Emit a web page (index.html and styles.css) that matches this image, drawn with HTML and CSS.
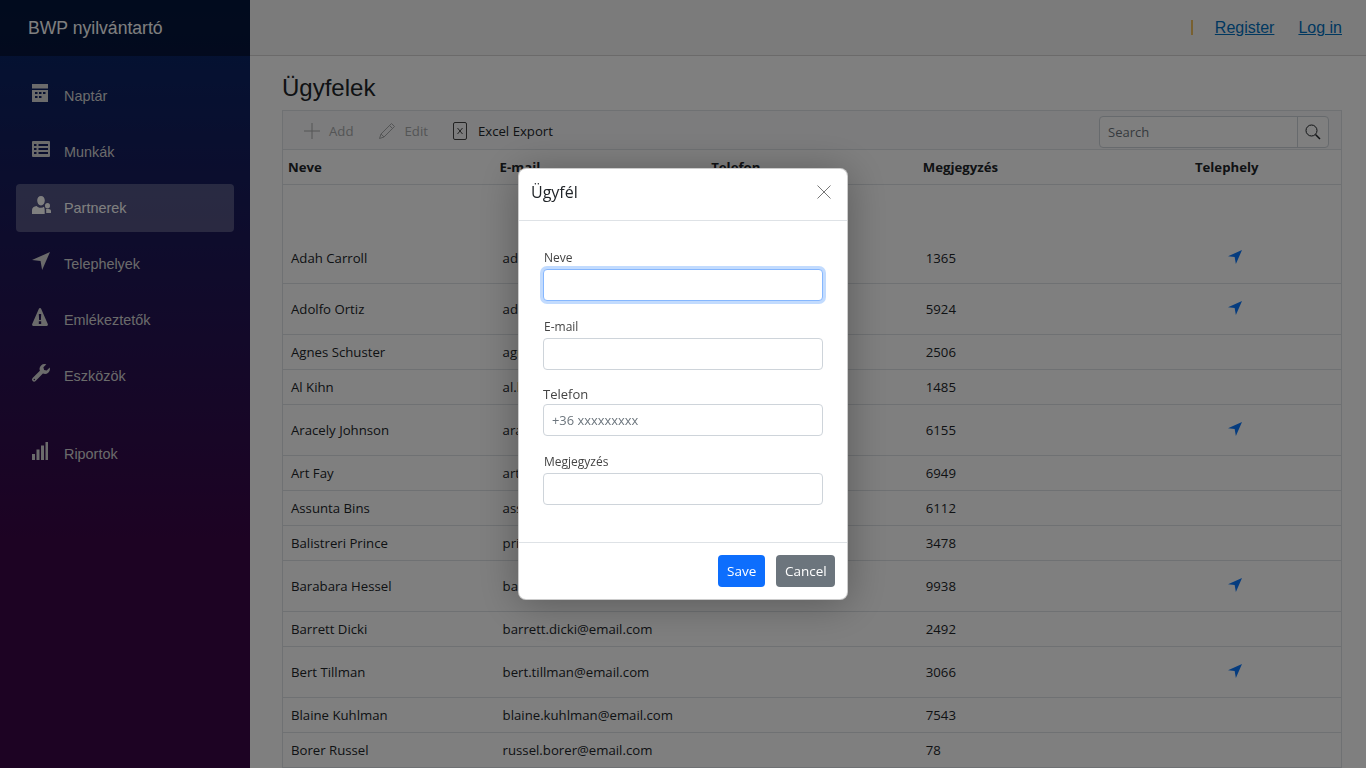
FILE: index.html
```html
<!DOCTYPE html>
<html lang="en">
    <head>
        <meta charset="UTF-8">
        <title>BWP nyilvántartó</title>
        <link rel="stylesheet" href="styles.css">
    </head>

    <body>
        <svg class="icon-defs" width="0" height="0">
            <symbol id="i-location" viewBox="0 0 16 16"><path d="M16 0 0 7.200l7.600.9L9 16z"/></symbol>
        </svg>

        <div class="app">
            <aside class="sidebar">
                <div class="brand">BWP nyilvántartó</div>
                <nav class="nav">
                    <a class="nav-item">
                        <svg class="nav-icon" viewBox="0 0 18 18"><path d="M0 0h16v4.500H0zM0 6h16v12H0zM3 8v2h2.500V8zm4 0v2h2.500V8zm4 0v2h2.500V8zM3 12v2h2.500v-2zm4 0v2h2.500v-2z" fill-rule="evenodd"/></svg>
                        Naptár
                    </a>
                    <a class="nav-item">
                        <svg class="nav-icon" viewBox="0 0 18 18"><path d="M1 1h16a1 1 0 0 1 1 1v14a1 1 0 0 1-1 1H1a1 1 0 0 1-1-1V2a1 1 0 0 1 1-1zm1 3v2h2.500V4zm4.500 0v2H16V4zM2 8v2h2.500V8zm4.500 0v2H16V8zM2 12v2h2.500v-2zm4.500 0v2H16v-2z" fill-rule="evenodd"/></svg>
                        Munkák
                    </a>
                    <a class="nav-item active">
                        <svg class="nav-icon" viewBox="0 0 18 18"><path d="M9 0c2.300 0 3.800 2 3.800 4.600S11.300 9.500 9 9.500 5.200 7.200 5.200 4.600 6.700 0 9 0zM0 14c0-2.300 2-3.500 4.600-4 1.100 1.300 2.700 2 4.400 1.800 1.300-.1 2.200-.5 2.900-1 .5 1 .8 2 .8 3.200v4H0zM15.500 7a2.500 2.700 0 1 1 0 5.400 2.500 2.700 0 0 1 0-5.400zM14 13h2.500c1.500 0 2.500.8 2.500 2v2h-4.800v-2.500c0-.5 0-1-.2-1.500z"/></svg>
                        Partnerek
                    </a>
                    <a class="nav-item">
                        <svg class="nav-icon" viewBox="0 0 16 16"><use href="#i-location"/></svg>
                        Telephelyek
                    </a>
                    <a class="nav-item">
                        <svg class="nav-icon" viewBox="0 0 18 18"><path d="M8 0c.5 0 .9.300 1.100.8l6.700 15.200c.4.900-.1 2-1.100 2H1.300c-1 0-1.500-1.100-1.100-2L6.900.8C7.100.3 7.500 0 8 0zM6.800 6l.3 6h1.800l.3-6zM6.800 13.200V16h2.400v-2.800z" fill-rule="evenodd"/></svg>
                        Emlékeztetők
                    </a>
                    <a class="nav-item">
                        <svg class="nav-icon" viewBox="0 0 18 18"><path d="M17.700 3.600l-3 3-2.600-.7-.7-2.600 3-3a5 5 0 0 0-6.500 6.400L.6 13.900a2.100 2.100 0 0 0 3 3l7.300-7.300a5 5 0 0 0 6.800-6zM2.300 16.200a.7.7 0 1 1 0-1.400.7.7 0 0 1 0 1.400z" fill-rule="evenodd"/></svg>
                        Eszközök
                    </a>
                    <a class="nav-item reports">
                        <svg class="nav-icon" viewBox="0 0 18 18"><path d="M0 12h3v6H0zM4.500 7.500h3V18h-3zM9 3.500h3V18H9zM13.500 0H16v18h-2.500z"/></svg>
                        Riportok
                    </a>
                </nav>
            </aside>

            <div class="main">
                <header class="topbar">
                    <span class="divider"></span>
                    <a class="top-link">Register</a>
                    <a class="top-link">Log in</a>
                </header>

                <div class="content">
                    <h1 class="title">Ügyfelek</h1>

                    <div class="grid">
                        <div class="toolbar">
                            <span class="tool disabled">
                                <svg class="tool-icon add" viewBox="0 0 16 16"><path d="M8 0v16M0 8h16" fill="none" stroke="currentColor"/></svg>
                                Add
                            </span>
                            <span class="tool disabled">
                                <svg class="tool-icon edit" viewBox="0 0 18 18"><path d="M13.500 1.500l3 3L6 15l-4.500 1.500L3 12zM11.500 3.500l3 3M3 12l3 3" fill="none" stroke="currentColor"/></svg>
                                Edit
                            </span>
                            <span class="tool">
                                <svg class="tool-icon excel" viewBox="0 0 14 18"><rect x=".5" y=".5" width="13" height="17" rx="1.500" fill="none" stroke="currentColor"/><path d="M4.500 6l5 6m0-6l-5 6" fill="none" stroke="currentColor"/></svg>
                                Excel Export
                            </span>
                            <div class="search">
                                <span class="search-input">Search</span>
                                <span class="search-btn">
                                    <svg width="16" height="16" viewBox="0 0 16 16"><circle cx="6.500" cy="6.500" r="5.500" fill="none" stroke="currentColor"/><path d="M10.500 10.500 15 15" fill="none" stroke="currentColor" stroke-width="1.500"/></svg>
                                </span>
                            </div>
                        </div>

                        <table class="data">
                            <thead>
                                <tr>
                                    <th>Neve</th>
                                    <th>E-mail</th>
                                    <th>Telefon</th>
                                    <th>Megjegyzés</th>
                                    <th class="site">Telephely</th>
                                </tr>
                            </thead>
                            <tbody>
                                <tr class="spacer"><td colspan="5"></td></tr>
                                <tr class="tall"><td>Adah Carroll</td><td>adah.carroll@email.com</td><td></td><td>1365</td><td class="site"><svg class="pin"><use href="#i-location"/></svg></td></tr>
                                <tr class="tall"><td>Adolfo Ortiz</td><td>adolfo.ortiz@email.com</td><td></td><td>5924</td><td class="site"><svg class="pin"><use href="#i-location"/></svg></td></tr>
                                <tr><td>Agnes Schuster</td><td>agnes.schuster@email.com</td><td></td><td>2506</td><td></td></tr>
                                <tr><td>Al Kihn</td><td>al.kihn@email.com</td><td></td><td>1485</td><td></td></tr>
                                <tr class="tall"><td>Aracely Johnson</td><td>aracely.johnson@email.com</td><td></td><td>6155</td><td class="site"><svg class="pin"><use href="#i-location"/></svg></td></tr>
                                <tr><td>Art Fay</td><td>art.fay@email.com</td><td></td><td>6949</td><td></td></tr>
                                <tr><td>Assunta Bins</td><td>assunta.bins@email.com</td><td></td><td>6112</td><td></td></tr>
                                <tr><td>Balistreri Prince</td><td>prince.balistreri@email.com</td><td></td><td>3478</td><td></td></tr>
                                <tr class="tall"><td>Barabara Hessel</td><td>barabara.hessel@email.com</td><td></td><td>9938</td><td class="site"><svg class="pin"><use href="#i-location"/></svg></td></tr>
                                <tr><td>Barrett Dicki</td><td>barrett.dicki@email.com</td><td></td><td>2492</td><td></td></tr>
                                <tr class="tall"><td>Bert Tillman</td><td>bert.tillman@email.com</td><td></td><td>3066</td><td class="site"><svg class="pin"><use href="#i-location"/></svg></td></tr>
                                <tr><td>Blaine Kuhlman</td><td>blaine.kuhlman@email.com</td><td></td><td>7543</td><td></td></tr>
                                <tr><td>Borer Russel</td><td>russel.borer@email.com</td><td></td><td>78</td><td></td></tr>
                            </tbody>
                        </table>
                    </div>
                </div>
            </div>
        </div>

        <div class="backdrop">
            <div class="modal">
                <div class="modal-head">
                    <span class="modal-title">Ügyfél</span>
                    <svg class="modal-close" viewBox="0 0 14 14"><path d="M.5.5l13 13m0-13l-13 13" fill="none" stroke="currentColor"/></svg>
                </div>
                <div class="modal-body">
                    <label class="small">Neve</label>
                    <div class="field focus"></div>
                    <label class="small">E-mail</label>
                    <div class="field"></div>
                    <label class="large">Telefon</label>
                    <div class="field placeholder">+36 xxxxxxxxx</div>
                    <label class="small">Megjegyzés</label>
                    <div class="field"></div>
                </div>
                <div class="modal-foot">
                    <button class="btn btn-save">Save</button>
                    <button class="btn btn-cancel">Cancel</button>
                </div>
            </div>
        </div>
    </body>
</html>
```

FILE: styles.css
```css
*{
    box-sizing: border-box;
}
html, body{
    height: 100%;
}
body{
    margin: 0;
    overflow: hidden;
    font-family: "Open Sans", "Noto Sans", sans-serif;
    font-size: 13.200px;
    color: #212529;
    background: #fff;
}
.icon-defs{
    position: absolute;
}
.app{
    display: flex;
    height: 768px;
}

/* sidebar */
.sidebar{
    width: 250px;
    flex: none;
    background-image: linear-gradient(180deg, #052767 0%, #3a0647 70%);
    font-family: "Liberation Sans", Arial, sans-serif;
}
.brand{
    height: 56px;
    padding: 0 28px;
    display: flex;
    align-items: center;
    background: rgba(0,0,0,0.4);
    color: #fff;
    font-size: 17.600px;
}
.nav{
    padding-top: 16px;
    display: flex;
    flex-direction: column;
}
.nav-item{
    height: 48px;
    margin: 0 16px 8px;
    padding-left: 16px;
    border-radius: 4px;
    display: flex;
    align-items: center;
    color: #d7d7d7;
    font-size: 14.400px;
}
.nav-item.active{
    background: rgba(255,255,255,0.25);
    color: #fff;
}
.nav-item.reports{
    margin-top: 22px;
}
.nav-icon{
    width: 18px;
    height: 18px;
    margin-right: 14px;
    position: relative;
    top: -3px;
    fill: currentColor;
    flex: none;
    overflow: visible;
}

/* top bar */
.main{
    flex: 1;
    min-width: 0;
}
.topbar{
    height: 56px;
    padding-right: 24px;
    display: flex;
    align-items: center;
    justify-content: flex-end;
    background: #f7f7f7;
    border-bottom: 1px solid #d6d5d5;
    font-family: "Liberation Sans", Arial, sans-serif;
    font-size: 16px;
}
.divider{
    width: 2px;
    height: 15px;
    background: #f0c060;
}
.top-link{
    margin-left: 24px;
    color: #0071c1;
    text-decoration: underline;
}
.divider + .top-link{
    margin-left: 22px;
}

.content{
    padding: 0 24px 0 32px;
}
.title{
    margin: 0;
    height: 54px;
    padding-top: 14px;
    font-family: "Liberation Sans", Arial, sans-serif;
    font-size: 24px;
    font-weight: 400;
    line-height: 36px;
}

/* grid */
.grid{
    border: 1px solid #dee2e6;
    border-bottom: 0;
}
.toolbar{
    height: 39px;
    padding: 2px 12px 0 21px;
    display: flex;
    align-items: center;
    background: #f8f9fa;
    border-bottom: 1px solid #dee2e6;
}
.tool{
    display: flex;
    align-items: center;
    margin-right: 25px;
}
.tool.disabled{
    color: #a8aaac;
}
.tool-icon{
    margin-right: 9px;
    flex: none;
}
.tool-icon.add{
    width: 16px;
    height: 16px;
}
.tool-icon.edit{
    width: 18px;
    height: 18px;
    margin-right: 8px;
}
.tool-icon.excel{
    width: 14px;
    height: 18px;
    margin-right: 11px;
    color: #444;
}
.search{
    margin-left: auto;
    margin-top: 2px;
    width: 230px;
    height: 32px;
    display: flex;
    background: #fff;
    border: 1px solid #ced4da;
    border-radius: 4px;
}
.search-input{
    flex: 1;
    padding: 0 8px;
    line-height: 31px;
    font-size: 13px;
    color: #6c757d;
}
.search-btn{
    width: 31px;
    display: flex;
    align-items: center;
    justify-content: center;
    border-left: 1px solid #ced4da;
}
.data{
    width: 1058px;
    table-layout: fixed;
    border-collapse: collapse;
}
.data th{
    height: 34px;
    padding: 0 5px;
    text-align: left;
    font-weight: 700;
    border-bottom: 1px solid #dee2e6;
}
.data th.site{
    padding-right: 22px;
    text-align: center;
}
.data td{
    height: 35px;
    padding: 1px 8px 0;
    border-bottom: 1px solid #dee2e6;
    white-space: nowrap;
}
.data tr.tall td{
    height: 51px;
}
.data tr.spacer td{
    height: 48px;
    border-bottom: 0;
}
.data td.site{
    text-align: center;
}
.pin{
    width: 14px;
    height: 14px;
    fill: #0b78ff;
    position: relative;
    top: 1px;
}

/* modal */
.backdrop{
    position: fixed;
    inset: 0;
    background: rgba(0,0,0,0.5);
    display: flex;
    justify-content: center;
    align-items: flex-start;
    padding-top: 168px;
}
.modal{
    width: 330px;
    background: #fff;
    border: 1px solid rgba(0,0,0,0.2);
    border-radius: 8px;
    box-shadow: 0 4px 40px rgba(0,0,0,0.3);
}
.modal-head{
    height: 52px;
    padding: 0 16px 6px 12px;
    display: flex;
    align-items: center;
    justify-content: space-between;
    border-bottom: 1px solid #dee2e6;
}
.modal-title{
    font-size: 16px;
}
.modal-close{
    width: 14px;
    height: 14px;
    color: #777;
}
.modal-body{
    padding: 27px 24px 37px;
    display: flex;
    flex-direction: column;
}
.modal-body label{
    margin-left: 1px;
}
.small{
    font-size: 12px;
    line-height: 20px;
    height: 21px;
    color: #444;
}
.large{
    margin-left: 0 !important;
    font-size: 13px;
    line-height: 16px;
    height: 18px;
    color: #444;
}
.field{
    height: 32px;
    margin-bottom: 16px;
    background: #fff;
    border: 1px solid #ced4da;
    border-radius: 4px;
}
.field:last-child{
    margin-bottom: 0;
}
.field.focus{
    border-color: #86b7fe;
    box-shadow: 0 0 0 3px rgba(13,110,253,0.25);
}
.field.placeholder{
    padding-left: 8px;
    line-height: 30px;
    font-size: 12.900px;
    color: #6c757d;
}
.modal-foot{
    height: 57px;
    padding: 12px;
    display: flex;
    justify-content: flex-end;
    border-top: 1px solid #dee2e6;
}
.btn{
    height: 32px;
    margin-left: 11px;
    border: 1px solid transparent;
    border-radius: 4px;
    font-family: inherit;
    font-size: 13.500px;
    color: #fff;
    padding: 0 8px;
}
.btn-save{
    width: 47px;
    background: #0d6efd;
}
.btn-cancel{
    width: 59px;
    background: #6c757d;
}
```
